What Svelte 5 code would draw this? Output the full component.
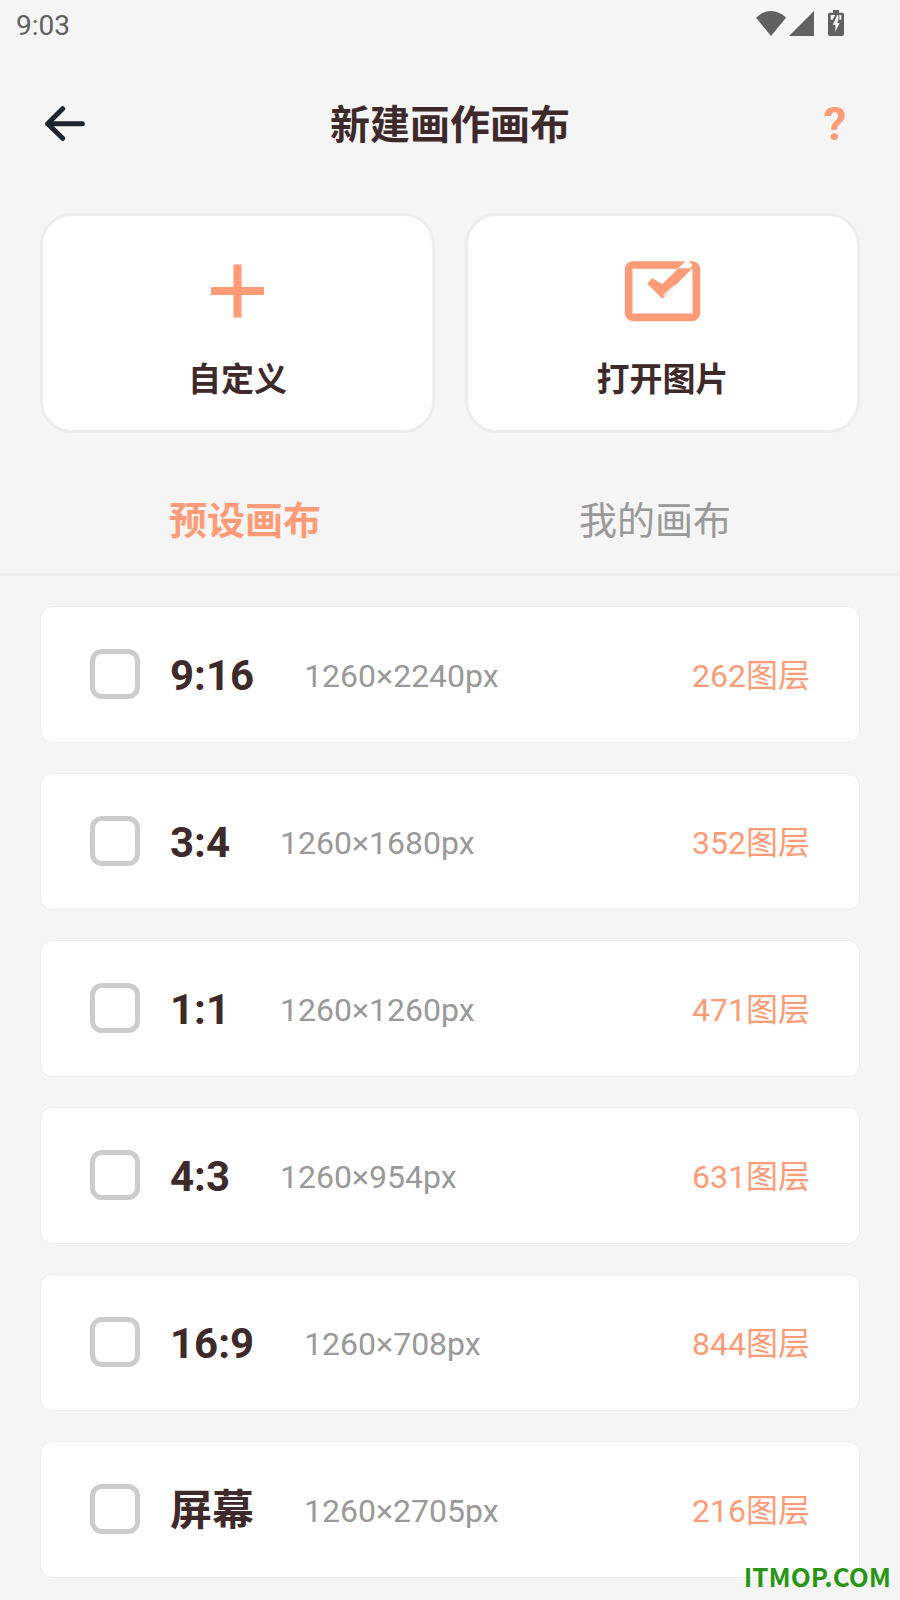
<script>
  const presets = [
    { id: 'r9-16', name: '9:16', size: '1260×2240px', layers: 262 },
    { id: 'r3-4', name: '3:4', size: '1260×1680px', layers: 352 },
    { id: 'r1-1', name: '1:1', size: '1260×1260px', layers: 471 },
    { id: 'r4-3', name: '4:3', size: '1260×954px', layers: 631 },
    { id: 'r16-9', name: '16:9', size: '1260×708px', layers: 844 },
    { id: 'screen', name: '屏幕', size: '1260×2705px', layers: 216 },
  ];
  const tabs = ['预设画布', '我的画布'];

  let activeTab = $state(0);
  let selected = $state(null);

  function toggle(id) {
    selected = selected === id ? null : id;
  }
</script>

<div class="page">
  <div class="status">
    <span class="time">9:03</span>
    <div class="status-icons">
      <svg class="wifi" viewBox="0 0 90 75" aria-hidden="true">
        <path d="M0 20Q20 0 45 0T90 20L45 75Z" />
      </svg>
      <svg class="signal" viewBox="0 0 75 75" aria-hidden="true">
        <path d="M0 75L75 0V75Z" />
      </svg>
      <svg class="battery" viewBox="0 0 48 78" aria-hidden="true">
        <path fill-rule="evenodd" d="M15 0H33V8H43Q48 8 48 13V73Q48 78 43 78H5Q0 78 0 73V13Q0 8 5 8H15ZM8 15V29H14L22 15ZM28 15L14 44H22V65L35 39H28L31 30V15ZM34 15V29H40V15Z" />
      </svg>
    </div>
  </div>

  <header class="header">
    <button class="back" aria-label="返回">
      <svg viewBox="0 0 120 105" aria-hidden="true">
        <path d="M53 8L8 53L53 97M8 53H112" />
      </svg>
    </button>
    <h1>新建画作画布</h1>
    <button class="help">?</button>
  </header>

  <div class="actions">
    <button class="action">
      <svg class="plus" viewBox="0 0 52 52" aria-hidden="true">
        <path d="M22 0H30V22H52V30H30V52H22V30H0V22H22Z" />
      </svg>
      <span>自定义</span>
    </button>
    <button class="action">
      <svg class="picture" viewBox="74 59 228 186" aria-hidden="true">
        <rect x="85" y="74" width="203" height="157" rx="12" fill="none" stroke="#ff9c77" stroke-width="23" />
        <path d="M141 130L155 113L186 132L234 84H276L186 175Z" />
        <path class="cut" d="M234 84L260 58L277 75L268 84Z" />
        <path class="cut" d="M189 163L214 141L232 130L226 135L191 167Z" />
      </svg>
      <span>打开图片</span>
    </button>
  </div>

  <div class="tabs" role="tablist">
    {#each tabs as tab, i}
      <button class="tab" class:active={activeTab === i} role="tab" aria-selected={activeTab === i} onclick={() => (activeTab = i)}>{tab}</button>
    {/each}
  </div>

  <div class="list">
    {#each presets as p (p.id)}
      <label class="row" for={p.id}>
        <input type="checkbox" id={p.id} checked={selected === p.id} onchange={() => toggle(p.id)} />
        <span class="name">{p.name}</span>
        <span class="size">{p.size}</span>
        <span class="layers">{p.layers}图层</span>
      </label>
    {/each}
  </div>

  <div class="mark">ITMOP.COM</div>
</div>

<style>
  :global(body) { background: #f5f5f5; }
  .page {
    position: relative;
    font-family: Roboto, "Noto Sans CJK SC", sans-serif;
    color: #3e2a2a;
    padding-bottom: 22px;
  }
  button { font: inherit; color: inherit; background: none; border: 0; padding: 0; cursor: pointer; }
  svg { display: block; }

  .status { display: flex; align-items: center; justify-content: space-between; height: 50px; padding: 0 56px 0 16px; color: #616161; }
  .time { font-size: 28px; font-weight: 400; }
  .status-icons { display: flex; align-items: center; fill: #616161; padding-bottom: 4px; }
  .wifi { width: 30px; height: 25px; margin-right: 3px; }
  .signal { width: 25px; height: 25px; margin-right: 14px; }
  .battery { width: 16px; height: 26px; }

  .header { display: grid; grid-template-columns: 50px 1fr 50px; align-items: center; height: 146px; padding: 0 40px; margin-bottom: 17px; }
  .back { padding: 0 5px; }
  .back svg { width: 40px; height: 35px; fill: none; stroke: #1c252e; stroke-width: 15; stroke-linecap: round; stroke-linejoin: round; }
  h1 { margin: 0; padding-top: 6px; font-size: 40px; line-height: 50px; font-weight: 700; text-align: center; }
  .help { padding-top: 2px; font-size: 46px; line-height: 50px; font-weight: 700; color: #ff9c77; }

  .actions { display: grid; grid-template-columns: 1fr 1fr; gap: 30px; padding: 0 40px; }
  .action {
    display: flex; flex-direction: column; align-items: center;
    height: 220px; padding-top: 44px;
    background: #fff; border: 3px solid #ededed; border-radius: 32px;
    font-size: 33px; line-height: 40px; font-weight: 700;
  }
  .action svg { fill: #ff9c77; margin-bottom: 38px; }
  .plus { width: 53px; height: 62px; }
  .picture { width: 76px; height: 62px; overflow: visible; }
  .picture .cut { fill: #fff; }

  .tabs { display: grid; grid-template-columns: 1fr 1fr; margin-top: 32px; padding: 0 40px; border-bottom: 3px solid #ededed; }
  .tab { height: 108px; padding-bottom: 4px; font-size: 38px; font-weight: 400; color: #999; }
  .tab.active { font-weight: 700; color: #ff9c77; }

  .list { display: flex; flex-direction: column; gap: 30px; padding: 30px 40px 0; }
  .row {
    display: flex; align-items: center; box-sizing: border-box;
    height: 137px; padding: 0 49px 1px;
    background: #fff; border: 1px solid #ededed; border-radius: 12px;
  }
  .row input {
    appearance: none; box-sizing: border-box; flex-shrink: 0;
    width: 50px; height: 50px; margin: 0 30px 0 0;
    border: 5px solid #ccc; border-radius: 12px;
  }
  .row input:checked { background: #ff9c77; border-color: #ff9c77; }
  .row span { line-height: 50px; padding-top: 4px; }
  .name { font-size: 42px; font-weight: 700; margin-right: 50px; }
  .size { font-size: 32px; color: #999; }
  .layers { font-size: 32px; color: #ff9c77; margin-left: auto; }

  .mark { position: absolute; right: 9px; bottom: 9px; font: 700 26px/30px "Noto Sans CJK SC", sans-serif; color: #289614; }
</style>
